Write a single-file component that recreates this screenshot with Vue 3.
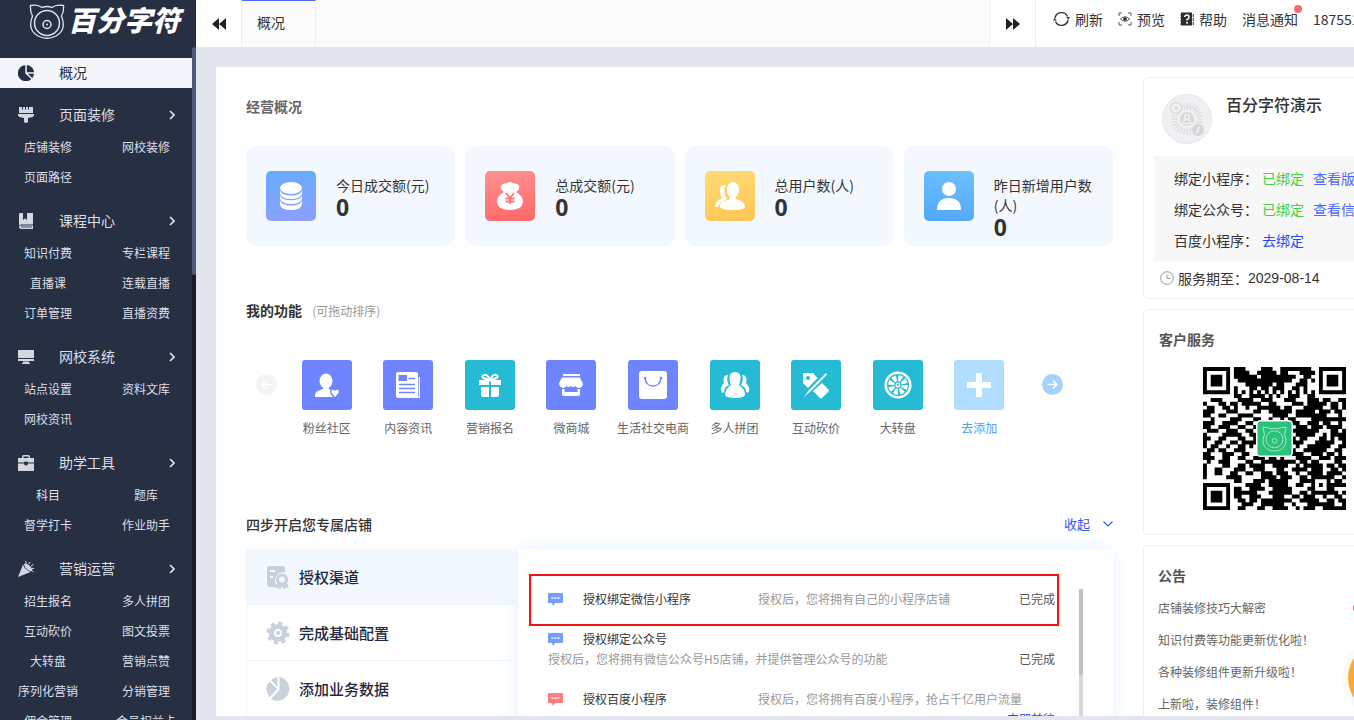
<script setup>
import {computed, ref} from "vue";

const menus = [
  {name: '页面装修', icon: 'brush', children: ['店铺装修', '网校装修', '页面路径']},
  {name: '课程中心', icon: 'book', children: ['知识付费', '专栏课程', '直播课', '连载直播', '订单管理', '直播资费']},
  {name: '网校系统', icon: 'screen', children: ['站点设置', '资料文库', '网校资讯']},
  {name: '助学工具', icon: 'case', children: ['科目', '题库', '督学打卡', '作业助手']},
  {name: '营销运营', icon: 'party', children: ['招生报名', '多人拼团', '互动砍价', '图文投票', '大转盘', '营销点赞', '序列化营销', '分销管理', '佣金管理', '会员权益卡']}
]
const stats = [
  {name: '今日成交额(元)', value: 0, icon: 'coins'},
  {name: '总成交额(元)', value: 0, icon: 'bag'},
  {name: '总用户数(人)', value: 0, icon: 'users'},
  {name: '昨日新增用户数(人)', value: 0, icon: 'user'}
]
const funcs = [
  {name: '粉丝社区', icon: 'fans', type: 'purple'},
  {name: '内容资讯', icon: 'news', type: 'purple'},
  {name: '营销报名', icon: 'gift', type: 'teal'},
  {name: '微商城', icon: 'shop', type: 'purple'},
  {name: '生活社交电商', icon: 'shopping', type: 'purple'},
  {name: '多人拼团', icon: 'group', type: 'teal'},
  {name: '互动砍价', icon: 'cut', type: 'teal'},
  {name: '大转盘', icon: 'wheel', type: 'teal'},
  {name: '去添加', icon: 'plus', type: 'add'}
]
const steps = ['授权渠道', '完成基础配置', '添加业务数据']
const tasks = [
  {name: '授权绑定微信小程序', desc: '授权后，您将拥有自己的小程序店铺', done: true},
  {name: '授权绑定公众号', desc: '授权后，您将拥有微信公众号H5店铺，并提供管理公众号的功能', done: true},
  {name: '授权百度小程序', desc: '授权后，您将拥有百度小程序，抢占千亿用户流量', done: false}
]
const notices = ['店铺装修技巧大解密', '知识付费等功能更新优化啦！', '各种装修组件更新升级啦！', '上新啦，装修组件！']

const activeStep = ref(0)

// 客服二维码点阵
const qrRows = [
  '1111111011100001110011111111001111111',
  '1000001011110011111011000111101000001',
  '1011101011111101111111110011001011101',
  '1011101001111111111111100110101011101',
  '1011101000011111110110001110001011101',
  '1000001010001101101110011010001000001',
  '1111111010101010101010101010101111111',
  '0000000011001111010100111001100000000',
  '0011100001111001110001110001110110011',
  '1000110110111110011000011101111101101',
  '0110011010010011111101100011111001101',
  '1110001110000110011111101111101110110',
  '1100110001111000001111001111111100010',
  '0010000111000110010010110000111111111',
  '1110011110011000000000011001110110010',
  '1100111001100100000000001110111011110',
  '0111001110011000000000011111110001101',
  '1000011111001100000000001111100101111',
  '1100110001100110000000010110001101011',
  '1001100110111110000000011100011111001',
  '1011001001101000000000001001111110011',
  '0110110011100010000000010011111100110',
  '1100011100110010000000011100111011010',
  '1110011001100111011010001111001110111',
  '0100111000011001111111110110110000110',
  '1000011001101111001111001011111011011',
  '1001100011100111000110011110111001101',
  '1001100110011001110111001001111011110',
  '1000001111000001111011100110111111001',
  '0000000011000111011111000111100010110',
  '1111111000011110011111001100101011111',
  '1000001011001111001111100001100011000',
  '1011101011111100011111100110111111101',
  '1011101011001110001110011011100100110',
  '1011101001101101111111100111110011011',
  '1000001000111001111110010001111111001',
  '1111111001100011001111001011100111111'
]
const qrPath = computed(() => {
  let d = ''
  qrRows.forEach((row, y) => {
    for (const run of row.matchAll(/1+/g)) {
      const len = run[0].length
      d += `M${run.index} ${y}h${len}v1.04h-${len}z`
    }
  })
  return d
})
// 头像放射线
const rays = Array.from({length: 28}, (_, i) => i * 360 / 28)
</script>

<template>
  <div class="shell">
    <aside class="sidebar">
      <div class="logo">
        <svg class="logo-mark" viewBox="0 0 36 36" fill="none" stroke="#dfe3ea">
          <path d="M1.500 2.500Q9 1 13 4.500Q18 2.500 23 4.500Q27 1 34.500 2.500Q35 9 32.500 13Q38 27 27 33Q18 37.500 9 33Q-2 27 3.500 13Q1 9 1.500 2.500Z" stroke-width="1.300"/>
          <circle cx="18" cy="20" r="12.500" stroke-width="1.500"/>
          <circle cx="18" cy="21.500" r="4" stroke-width="1.500"/>
          <circle cx="18" cy="21.500" r="1" fill="#dfe3ea" stroke="none"/>
        </svg>
        <span class="logo-text">百分字符</span>
      </div>
      <nav class="menu">
        <a class="menu-head active" href="#">
          <svg class="menu-icon" viewBox="0 0 16 16" fill="#272f43">
            <path d="M7.300 .2V8.600L13.300 14A8 8 0 1 1 7.300 .2Z"/>
            <path d="M8.800 0A8 8 0 0 1 16 7.300H8.800Z"/>
            <path d="M9.800 8.700H16A8 8 0 0 1 14.300 12.900Z"/>
          </svg>
          <span>概况</span>
        </a>
        <div v-for="menu in menus" :key="menu.name" class="menu-group">
          <a class="menu-head" href="#">
            <svg class="menu-icon" viewBox="0 0 16 16" fill="#d3d7e2">
              <g v-if="menu.icon === 'brush'">
                <path d="M1 0H4V2.500H5V0H7V2.500H8V0H10V2.500H11V0H15V6H1Z"/>
                <path d="M0 7H16V8Q16 10 13.500 10.300L10 11V15Q8 17 6 15V11L2.500 10.300Q0 10 0 8Z"/>
              </g>
              <g v-else-if="menu.icon === 'book'">
                <path d="M1 1Q1 0 2.500 0H5V7L7 5.300L9 7V0H15V11.500H3Q1 11.500 1 13Z"/>
                <path d="M1 13.500Q1.300 12.500 3 12.500H15V16H3Q1 16 1 13.500Z"/>
                <path d="M3 14H14" stroke="#272f43" stroke-width=".8"/>
              </g>
              <g v-else-if="menu.icon === 'screen'">
                <path d="M0 1H16V9H0ZM0 10H16V12H0ZM5 12.500H11V14H12V15H4V14H5Z"/>
              </g>
              <g v-else-if="menu.icon === 'case'">
                <path d="M4 3V1.500Q4 0 5.500 0H10.500Q12 0 12 1.500V3H16V7.500H10Q10 6.500 8 6.500T6 7.500H0V3ZM5.500 3H10.500V1.500H5.500ZM0 8.500H6Q6 10.500 8 10.500T10 8.500H16V16H0Z" fill-rule="evenodd"/>
              </g>
              <g v-else>
                <path d="M0 16L5 3.500Q6.500 8.500 12.500 11Z"/>
                <path d="M6 3Q8 1 12 5T13 10.500Q7 8.500 6 3Z"/>
                <path d="M7.500 0L8.500 2M12 1L10.800 3M15.500 3.500L13 4.800M14 7.300L16 7.500M13.700 9.500L15.500 11" fill="none" stroke="#d3d7e2"/>
              </g>
            </svg>
            <span>{{ menu.name }}</span>
            <svg class="menu-arrow" viewBox="0 0 6 10" fill="none" stroke="#e4e6ec" stroke-width="1.600"><path d="M1 1L5 5L1 9"/></svg>
          </a>
          <div class="menu-sub">
            <a v-for="child in menu.children" :key="child" href="#">{{ child }}</a>
          </div>
        </div>
      </nav>
      <div class="side-track"><div class="side-thumb"></div></div>
    </aside>

    <div class="body">
      <header class="topbar">
        <button class="tab-nav" title="向左">
          <svg width="14" height="12" viewBox="0 0 14 12" fill="#222"><path d="M7 0V12L0 6ZM14 0V12L7 6Z"/></svg>
        </button>
        <div class="tabs"><a class="tab" href="#">概况</a></div>
        <button class="tab-nav tab-right" title="向右">
          <svg width="14" height="12" viewBox="0 0 14 12" fill="#222"><path d="M0 0L7 6L0 12ZM7 0L14 6L7 12Z"/></svg>
        </button>
        <div class="tools">
          <a href="#">
            <svg width="17" height="16" viewBox="0 0 17 16" fill="none" stroke="#333" stroke-width="1.400">
              <path d="M2 7A6.600 6.600 0 0 1 14.500 5.500M15 9A6.600 6.600 0 0 1 2.500 10.500"/>
              <path d="M13.300 6H17L15.300 8.700ZM0 9.500H3.700L1.700 7Z" fill="#333" stroke="none"/>
            </svg>刷新
          </a>
          <a href="#">
            <svg width="14" height="14" viewBox="0 0 14 14" fill="none" stroke="#555">
              <path d="M1 4V1H4M10 1H13V4M13 10V13H10M4 13H1V10"/>
              <path d="M2.500 7Q7 2.500 11.500 7Q7 11.500 2.500 7Z"/><circle cx="7" cy="7" r="1.500" fill="#333"/>
            </svg>预览
          </a>
          <a href="#">
            <svg width="14" height="14" viewBox="0 0 14 14">
              <path d="M1 .5H12V13.500H1Z" fill="#2d2d2d"/>
              <path d="M0 3H2M0 6H2M0 9H2M0 12H2" stroke="#2d2d2d" stroke-width=".8"/>
              <path d="M13.300 2V5M13.300 6V9M13.300 10V13" stroke="#555" stroke-width="1.200"/>
              <path d="M4.700 5Q5 3 7 3T9 5T7 7.500V8.500" fill="none" stroke="#fff" stroke-width="1.500"/>
              <circle cx="7" cy="10.700" r="1" fill="#fff"/>
            </svg>帮助
          </a>
          <a href="#" class="message">消息通知<i></i></a>
          <a href="#">18755162380</a>
        </div>
      </header>

      <main class="page">
        <div class="panel">
          <section class="content">
            <h3 class="title title-light">经营概况</h3>
            <div class="stats">
              <div v-for="item in stats" :key="item.name" class="stat">
                <div :class="['stat-icon', item.icon]">
                  <svg width="50" height="50" viewBox="0 0 50 50" fill="#fff">
                    <g v-if="item.icon === 'coins'">
                      <ellipse cx="25" cy="17" rx="11" ry="6"/>
                      <path d="M14 19.500Q16 24.500 25 24.500T36 19.500V23Q34 28 25 28T14 23ZM14 24.500Q16 29.300 25 29.300T36 24.500V28Q34 33 25 33T14 28ZM14 29.500Q16 34.500 25 34.500T36 29.500V33.500Q35 39 25 39T14 33.500Z"/>
                    </g>
                    <g v-else-if="item.icon === 'bag'">
                      <path d="M19 21Q15 19 16 15Q17 12 21 12.500Q25 9.500 29 12.500Q33 12 34 15Q35 19 31 21Q38 25 38 31Q37 39 25 39T12 31Q12 25 19 21Z"/>
                      <path d="M21 22L25 27L29 22M20.500 27.500H29.500M20.500 30.500H29.500M25 27V33" fill="none" stroke="#ff7774" stroke-width="1.800"/>
                    </g>
                    <g v-else-if="item.icon === 'users'">
                      <path d="M21 14Q14 13 15 21Q16 25 17 27Q10 30 10 36H13Q14 32 22 28Q17 20 21 14Z"/>
                      <ellipse cx="28" cy="19" rx="6" ry="8"/>
                      <path d="M25 24H31V28Q39 30 40 35Q41 39 28 39Q13 39 15 34Q17 30 25 28Z"/>
                    </g>
                    <g v-else>
                      <circle cx="25" cy="18" r="7"/>
                      <path d="M13 39Q13 27 25 27T37 39Z"/>
                    </g>
                  </svg>
                </div>
                <div class="stat-info">
                  <p>{{ item.name }}</p>
                  <strong>{{ item.value }}</strong>
                </div>
              </div>
            </div>

            <h3 class="title func-title">我的功能 <small>(可拖动排序)</small></h3>
            <div class="funcs">
              <button class="circle disabled" title="上一页">
                <svg width="21" height="21" viewBox="0 0 21 21" fill="none" stroke="#fff" stroke-width="1.500"><path d="M15.500 10.500H6M10 6.500L6 10.500L10 14.500"/></svg>
              </button>
              <div class="func-list">
                <a v-for="item in funcs" :key="item.name" :class="['func', item.type]" href="#">
                  <svg width="50" height="50" viewBox="0 0 50 50" fill="#fff">
                    <g v-if="item.icon === 'fans'">
                      <ellipse cx="24" cy="21" rx="6.500" ry="7.500"/>
                      <path d="M21 26H27V29Q29 30 30 31Q28 34 31 37H13V35Q13 31 21 29Z"/>
                      <path d="M33 37L29.500 33Q28.500 30 31 29.700Q32.500 30 33 31Q33.500 30 35 29.700Q37.500 30 36.500 33Z" stroke="#6e85ff" stroke-width="2.400"/>
                      <path d="M33 37L29.500 33Q28.500 30 31 29.700Q32.500 30 33 31Q33.500 30 35 29.700Q37.500 30 36.500 33Z"/>
                    </g>
                    <g v-else-if="item.icon === 'news'">
                      <path d="M15 12H33Q35 12 35 14V38H15Q13 38 13 36V14Q13 12 15 12Z"/>
                      <path d="M36.300 17V37.300H34" fill="none" stroke="#fff" stroke-width="1.200"/>
                      <path d="M15.500 15H24V21H15.500Z" fill="#6f86ff"/>
                      <path d="M25.500 18.500H32M16 24.500H32M16 28.500H32M16 32.500H32" stroke="#6f86ff" stroke-width="1.300"/>
                    </g>
                    <g v-else-if="item.icon === 'gift'">
                      <path d="M14 20H24V25H14ZM26 20H36V25H26ZM16 27H24V37H18Q16 37 16 35ZM26 27H34V35Q34 37 32 37H26Z"/>
                      <path d="M25 20Q15 18 18 15.500Q22 13 25 20Q28 13 32 15.500Q35 18 25 20Z" fill="none" stroke="#fff" stroke-width="2"/>
                    </g>
                    <g v-else-if="item.icon === 'shop'">
                      <path d="M17 14H34V16H17ZM16 17.500H34L37 24Q36 28 33 28Q31 28 29.500 26Q27.500 28 25 26Q22.500 28 20.500 26Q19 28 17 28Q13 27 13 23Z"/>
                      <path d="M16 29V34Q16 36 18 36H32Q34 36 34 34V29H31.500V32H18.500V29Z"/>
                    </g>
                    <g v-else-if="item.icon === 'shopping'">
                      <rect x="11" y="11" width="28" height="28" rx="3"/>
                      <path d="M17 18Q18 26 25 26T33 18" fill="none" stroke="#7187ff" stroke-width="1.500"/>
                      <circle cx="17" cy="18" r="1.300" fill="#7187ff"/><circle cx="33" cy="18" r="1.300" fill="#7187ff"/>
                    </g>
                    <g v-else-if="item.icon === 'group'">
                      <path d="M18 15Q12 15 14 23Q10 27 11 31Q12 34 14 32Q14 27 19 25Q16 20 18 15ZM32 15Q38 15 36 23Q40 27 39 31Q38 34 36 32Q36 27 31 25Q34 20 32 15Z"/>
                      <path d="M25 12Q31 12 30.500 19Q30 23 29 25Q35 29 35 35Q34 38 25 38T15 35Q15 29 21 25Q20 23 19.500 19Q19 12 25 12Z"/>
                    </g>
                    <g v-else-if="item.icon === 'cut'">
                      <path d="M12 13H22L26.500 18L17 28L12 23Z"/>
                      <circle cx="17" cy="18" r="2" fill="#25bbd5"/>
                      <path d="M31 23L38 30Q38 31 37 32L31 38Q29 39 28 37L22 31Z"/>
                      <path d="M35 13L36 14.500L20 31L13 37L18 30Z"/>
                    </g>
                    <g v-else-if="item.icon === 'wheel'">
                      <circle cx="25" cy="25" r="12.300" fill="none" stroke="#fff" stroke-width="2.600"/>
                      <circle cx="25" cy="25" r="6.800" fill="none" stroke="#fff" stroke-width="6" stroke-dasharray="3.600 1.740"/>
                      <circle cx="25" cy="25" r="2.500"/>
                      <circle cx="25" cy="25" r="1" fill="#25bbd5"/>
                    </g>
                    <path v-else d="M22 13H28V22H37V28H28V37H22V28H13V22H22Z"/>
                  </svg>
                  <span>{{ item.name }}</span>
                </a>
              </div>
              <button class="circle" title="下一页">
                <svg width="21" height="21" viewBox="0 0 21 21" fill="none" stroke="#fff" stroke-width="1.500"><path d="M5.500 10.500H15M11 6.500L15 10.500L11 14.500"/></svg>
              </button>
            </div>

            <div class="step-head">
              <h3 class="title">四步开启您专属店铺</h3>
              <button class="fold">
                收起
                <svg width="10" height="6" viewBox="0 0 10 6" fill="none" stroke="#2d55fb" stroke-width="1.200"><path d="M.5 .5L5 5L9.500 .5"/></svg>
              </button>
            </div>
            <div class="steps">
              <div class="step-tabs">
                <button
                  v-for="(step, i) in steps"
                  :key="step"
                  :class="['step-tab', activeStep === i ? 'current' : '']"
                  @click="activeStep = i"
                >
                  <svg width="24" height="24" viewBox="0 0 24 24" fill="#c9d1dc">
                    <g v-if="i === 0">
                      <path d="M3 1H17Q19 1 19 3V7Q10 7 9 15Q9 19 11 22H3Q1 22 1 20V3Q1 1 3 1Z"/>
                      <path d="M4 6H9M4 12H7" stroke="#f3f8ff" stroke-width="2"/>
                      <circle cx="16" cy="14.500" r="4.600" fill="none" stroke="#c9d1dc" stroke-width="3"/>
                      <path d="M11 18L9 23L12 22.500L14 24.500L16 21L18 24.500L20 22.500L23 23L21 18Z"/>
                    </g>
                    <g v-else-if="i === 1">
                      <circle cx="12" cy="12" r="9"/>
                      <circle cx="12" cy="12" r="9.500" fill="none" stroke="#c9d1dc" stroke-width="4" stroke-dasharray="3.730 3.730"/>
                      <circle cx="12" cy="12" r="3" fill="none" stroke="#fff" stroke-width="1.800"/>
                    </g>
                    <g v-else>
                      <path d="M13.500 0A12 12 0 1 1 5 22L13.500 13Z"/>
                      <path d="M11.500 0V10L5 3Q8 .3 11.500 0ZM3.500 4.500L11 12L3.500 20.500Q-3 11 3.500 4.500Z"/>
                    </g>
                  </svg>
                  {{ step }}
                </button>
              </div>
              <div class="task-panel">
                <ul class="tasks">
                  <li v-for="task in tasks" :key="task.name">
                    <span class="task-name">
                      <svg :class="['bubble', task.done ? '' : 'red']" width="15" height="13" viewBox="0 0 15 13">
                        <path d="M1 0H14Q15 0 15 1V9Q15 10 14 10H7L5 13L4 10H1Q0 10 0 9V1Q0 0 1 0Z"/>
                        <path d="M3.500 5H5.500M6.500 5H8.500M9.500 5H11.500" stroke="#fff" stroke-width="1.600"/>
                      </svg>
                      {{ task.name }}
                    </span>
                    <span class="task-desc">{{ task.desc }}</span>
                    <span v-if="task.done" class="task-state">已完成</span>
                    <a v-else class="task-state" href="#">立即前往</a>
                  </li>
                </ul>
                <div class="task-track"><div class="task-thumb"></div></div>
                <div class="mark"></div>
              </div>
            </div>
          </section>

          <section class="extra">
            <div class="card shop">
              <div class="shop-head">
                <svg width="50" height="50" viewBox="0 0 50 50">
                  <circle cx="25" cy="25" r="24.500" fill="#f0f0f2" stroke="#e4e6ee"/>
                  <path v-for="r in rays" :key="r" d="M25 9V15" :transform="`rotate(${r} 25 25)`" stroke="#dcdcde" stroke-width="1.300"/>
                  <circle cx="25" cy="25" r="7" fill="#d9d9dc"/>
                  <circle cx="25" cy="23" r="2.300" fill="none" stroke="#f5f5f5" stroke-width="1.300"/>
                  <path d="M21 29.500Q22 25.500 25 25.500T29 29.500Z" fill="none" stroke="#f5f5f5" stroke-width="1.200"/>
                  <circle cx="14" cy="14" r="5.500" fill="#f0f0f2" stroke="#dcdcde" stroke-width="1.500"/>
                  <circle cx="14" cy="14" r="1.800" fill="#dcdcde"/>
                  <circle cx="36" cy="36" r="6" fill="#d6d6d9"/>
                  <path d="M33.500 38Q36 39.500 36 36T38.500 34" fill="none" stroke="#f5f5f5" stroke-width="1.300"/>
                </svg>
                <h2>百分字符演示</h2>
              </div>
              <div class="binds">
                <p>绑定小程序：<em>已绑定</em><a href="#">查看版本</a></p>
                <p>绑定公众号：<em>已绑定</em><a href="#">查看信息</a></p>
                <p>百度小程序：<a class="go" href="#">去绑定</a></p>
              </div>
              <p class="expire">
                <svg width="14" height="14" viewBox="0 0 14 14" fill="none" stroke="#999"><circle cx="7" cy="7" r="6.300"/><path d="M7 3.500V7.500H10.500"/></svg>
                服务期至：<time>2029-08-14</time>
              </p>
            </div>
            <div class="card service">
              <h3 class="title">客户服务</h3>
              <svg class="qr" viewBox="0 0 37 37">
                <path :d="qrPath" fill="#000"/>
                <rect x="13.700" y="13.700" width="9.600" height="9.600" rx="1.200" fill="#fff"/>
                <rect x="14.100" y="14.100" width="8.800" height="8.800" rx=".8" fill="#2cc17b"/>
                <g fill="none" stroke="#a8e8c8" stroke-width=".25">
                  <path d="M15.500 15.600Q16.800 15.500 17.500 16Q18.500 15.700 19.500 16Q20.200 15.500 21.500 15.600L21.100 17.500Q22.200 20 20.300 21.300Q18.500 22.200 16.700 21.300Q14.800 20 15.900 17.500Z"/>
                  <circle cx="18.500" cy="18.700" r="2.200"/>
                  <circle cx="18.500" cy="19.100" r=".6"/>
                </g>
              </svg>
            </div>
            <div class="card notice">
              <h3 class="title">公告</h3>
              <ul>
                <li v-for="(item, i) in notices" :key="item"><a href="#">{{ item }}</a><i v-if="i === 0"></i></li>
              </ul>
            </div>
          </section>
        </div>
      </main>
    </div>
    <button class="float-btn" title="客服"></button>
  </div>
</template>

<style>
body{
  margin: 0;
  overflow: hidden;
}
</style>

<style scoped>
.shell{
  position: relative;
  display: flex;
  height: 100vh;
  min-width: 1440px;
  overflow: hidden;
  background: #e3e6ef;
  color: #333;
  font-family: "Noto Sans CJK SC", "Microsoft YaHei", sans-serif;
  font-size: 14px;
}
a{
  color: inherit;
  text-decoration: none;
}
button{
  border: 0;
  padding: 0;
  background: none;
  color: inherit;
  font: inherit;
  cursor: pointer;
}
h2, h3, p, ul{
  margin: 0;
  padding: 0;
}
li{
  list-style: none;
}
svg{
  display: block;
  flex: none;
}
.sidebar{
  position: relative;
  width: 196px;
  flex: none;
  overflow: hidden;
  background: #272f43;
  color: #dcdfe7;
}
.logo{
  display: flex;
  height: 58px;
  padding-left: 29px;
  box-sizing: border-box;
}
.logo-mark{
  width: 36px;
  height: 36px;
  margin-top: 3px;
}
.logo-text{
  margin-left: 3px;
  line-height: 38px;
  font-size: 28px;
  font-weight: 900;
  font-style: italic;
  color: #fff;
  white-space: nowrap;
}
.menu-head{
  display: flex;
  align-items: center;
  height: 34px;
  padding: 0 21px 0 18px;
}
.menu-head span{
  margin-bottom: 2px;
}
.menu-head.active{
  height: 30px;
  margin-bottom: 10px;
  background: #f4f5fa;
  color: #272f43;
}
.menu-icon{
  width: 16px;
  height: 16px;
  margin-right: 25px;
}
.menu-arrow{
  width: 6px;
  height: 10px;
  margin-left: auto;
}
.menu-group{
  padding-bottom: 12px;
}
.menu-sub{
  display: grid;
  grid-template-columns: 96px 100px;
  line-height: 30px;
  font-size: 12px;
  text-align: center;
}
.side-track{
  position: absolute;
  top: 47px;
  right: 0;
  bottom: 0;
  width: 4px;
  background: #181e2b;
}
.side-thumb{
  height: 228px;
  border-radius: 2px;
  background: #4f5b79;
}
.body{
  flex: 1;
  min-width: 0;
}
.topbar{
  display: flex;
  height: 47px;
  background: #fff;
}
.tab-nav{
  display: flex;
  align-items: center;
  justify-content: center;
  width: 46px;
  box-sizing: border-box;
  border-right: 1px solid #eee;
}
.tab-right{
  width: 47px;
  border-left: 1px solid #eee;
}
.tabs{
  flex: 1;
  display: flex;
  background: #fbfbfb;
}
.tab{
  width: 74px;
  padding-left: 15px;
  box-sizing: border-box;
  border-top: 1px solid #4c68f5;
  border-right: 1px solid #eee;
  line-height: 42px;
}
.tools{
  display: flex;
  gap: 15px;
  width: 387px;
  padding-left: 17px;
  line-height: 38px;
}
.tools a{
  display: flex;
  align-items: center;
  gap: 5px;
  height: 38px;
}
.tools .message{
  position: relative;
}
.message i{
  position: absolute;
  top: 5px;
  right: -4px;
  width: 8px;
  height: 8px;
  border-radius: 50%;
  background: #f56c6c;
}
.page{
  padding: 20px 0 0 20px;
}
.panel{
  display: flex;
  gap: 30px;
  height: calc(100vh - 71px);
  padding: 0 20px 0 30px;
  box-sizing: border-box;
  overflow: hidden;
  background: #fff;
}
.content{
  flex: 1;
  min-width: 0;
  padding-top: 29px;
}
.title{
  line-height: 20px;
  font-size: 14px;
  font-weight: 700;
}
.title-light{
  color: #666;
}
.stats{
  display: grid;
  grid-template-columns: repeat(4, 1fr);
  gap: 10px;
  margin-top: 30px;
}
.stat{
  display: flex;
  gap: 20px;
  height: 100px;
  padding: 25px 20px 0;
  box-sizing: border-box;
  border-radius: 10px;
  background: #f3f8ff;
}
.stat-icon{
  width: 50px;
  height: 50px;
  border-radius: 5px;
}
.coins{
  background: linear-gradient(170deg, #66abff, #8e9fff);
}
.bag{
  background: linear-gradient(170deg, #ff9292, #ff6866);
}
.users{
  background: linear-gradient(170deg, #ffdb74, #ffc654);
}
.user{
  background: linear-gradient(190deg, #6dc1ff, #50a7f9);
}
.stat-info{
  padding-top: 4px;
}
.stat-info p{
  line-height: 20px;
}
.stat-info strong{
  display: block;
  line-height: 24px;
  font-family: "Open Sans", sans-serif;
  font-size: 23px;
}
.func-title{
  margin-top: 54px;
}
.func-title small{
  margin-left: 7px;
  font-size: 12px;
  font-weight: 400;
  color: #999;
}
.funcs{
  display: flex;
  align-items: flex-start;
  margin-top: 39px;
  padding: 0 50px 0 10px;
}
.circle{
  width: 21px;
  height: 21px;
  margin-top: 14px;
  border-radius: 50%;
  background: #a5d1fb;
}
.circle.disabled{
  background: #f4f4f4;
}
.func-list{
  flex: 1;
  display: grid;
  grid-template-columns: repeat(9, 1fr);
  margin: 0 22px 0 9px;
}
.func{
  display: flex;
  flex-direction: column;
  align-items: center;
  line-height: 20px;
  font-size: 12px;
  color: #666;
  white-space: nowrap;
}
.func svg{
  margin-bottom: 8px;
  border-radius: 3px;
  background: #6e85ff;
}
.func.teal svg{
  background: #25bbd5;
}
.func.add svg{
  background: #b1ddff;
}
.func.add{
  color: #4a9ff9;
}
.step-head{
  display: flex;
  justify-content: space-between;
  margin-top: 76px;
}
.step-head .title{
  font-weight: 500;
}
.fold{
  display: flex;
  align-items: center;
  gap: 13px;
  line-height: 20px;
  font-size: 13px;
  color: #2d55fb;
}
.steps{
  display: flex;
  height: 240px;
  margin-top: 15px;
}
.step-tabs{
  width: 272px;
  flex: none;
  border-left: 1px solid #f0f5fc;
  box-sizing: border-box;
}
.step-tab{
  display: flex;
  align-items: center;
  gap: 9px;
  width: 100%;
  height: 56px;
  padding-left: 19px;
  border-bottom: 1px solid #f0f5fc;
  font-size: 15px;
  font-weight: 500;
  color: #1f2840;
}
.step-tab.current{
  background: #f3f8ff;
}
.task-panel{
  position: relative;
  flex: 1;
  display: flex;
  justify-content: space-between;
  padding: 40px 30px 0;
  background: #fff;
  box-shadow: 0 0 20px #e6f2ff;
}
.tasks{
  width: 507px;
  line-height: 20px;
  font-size: 12px;
}
.tasks li{
  display: flex;
  flex-wrap: wrap;
  margin-bottom: 20px;
}
.task-name{
  display: flex;
  align-items: center;
  gap: 20px;
  width: 210px;
}
.bubble{
  fill: #739dff;
}
.bubble.red{
  fill: #ff7c80;
}
.task-desc{
  color: #999;
}
.task-state{
  margin-left: auto;
  color: #555;
}
a.task-state{
  color: #2d3ffb;
}
.task-track{
  width: 4px;
  background: #d8d8d8;
}
.task-thumb{
  height: 86px;
  border-radius: 2px;
  background: #bfbfbf;
}
.mark{
  position: absolute;
  top: 25px;
  left: 11px;
  right: 54px;
  height: 48px;
  border: 2px solid #f01414;
}
.extra{
  width: 277px;
  flex: none;
  padding-top: 10px;
}
.card{
  margin-bottom: 10px;
  border: 1px solid #eee;
  border-radius: 5px;
  box-sizing: border-box;
}
.shop{
  height: 222px;
  padding: 16px 10px 0;
}
.shop-head{
  display: flex;
  gap: 14px;
  padding-left: 8px;
}
.shop-head h2{
  line-height: 20px;
  font-size: 16px;
  font-weight: 500;
}
.binds{
  margin-top: 12px;
  padding: 7px 0 5px 20px;
  background: #f7f7f7;
  line-height: 31px;
}
.binds em{
  margin: 0 9px 0 4px;
  font-style: normal;
  color: #42cf42;
}
.binds a{
  color: #4f68fb;
}
.binds .go{
  margin-left: 4px;
  color: #2448fb;
}
.expire{
  display: flex;
  align-items: center;
  gap: 4px;
  padding: 7px 0 0 6px;
  line-height: 20px;
}
.expire time{
  margin-left: -4px;
  font-family: "Liberation Sans", sans-serif;
}
.service{
  height: 226px;
  padding: 19px 15px 0;
}
.service .title, .notice .title{
  color: #555;
}
.qr{
  width: 143px;
  height: 143px;
  margin: 18px 0 0 44px;
}
.notice{
  height: 260px;
  padding: 19px 14px 0;
}
.notice ul{
  margin-top: 7px;
  line-height: 32px;
  font-size: 12px;
  color: #666;
}
.notice li{
  display: flex;
  align-items: center;
  justify-content: space-between;
}
.notice i{
  width: 52px;
  height: 8px;
  border-radius: 4px;
  background: #f0606a;
}
.float-btn{
  position: absolute;
  top: 642px;
  right: 20px;
  width: 72px;
  height: 72px;
  border-radius: 50%;
  background: #ffa82e;
  box-shadow: 0 0 0 6px #fafafa;
}
</style>
